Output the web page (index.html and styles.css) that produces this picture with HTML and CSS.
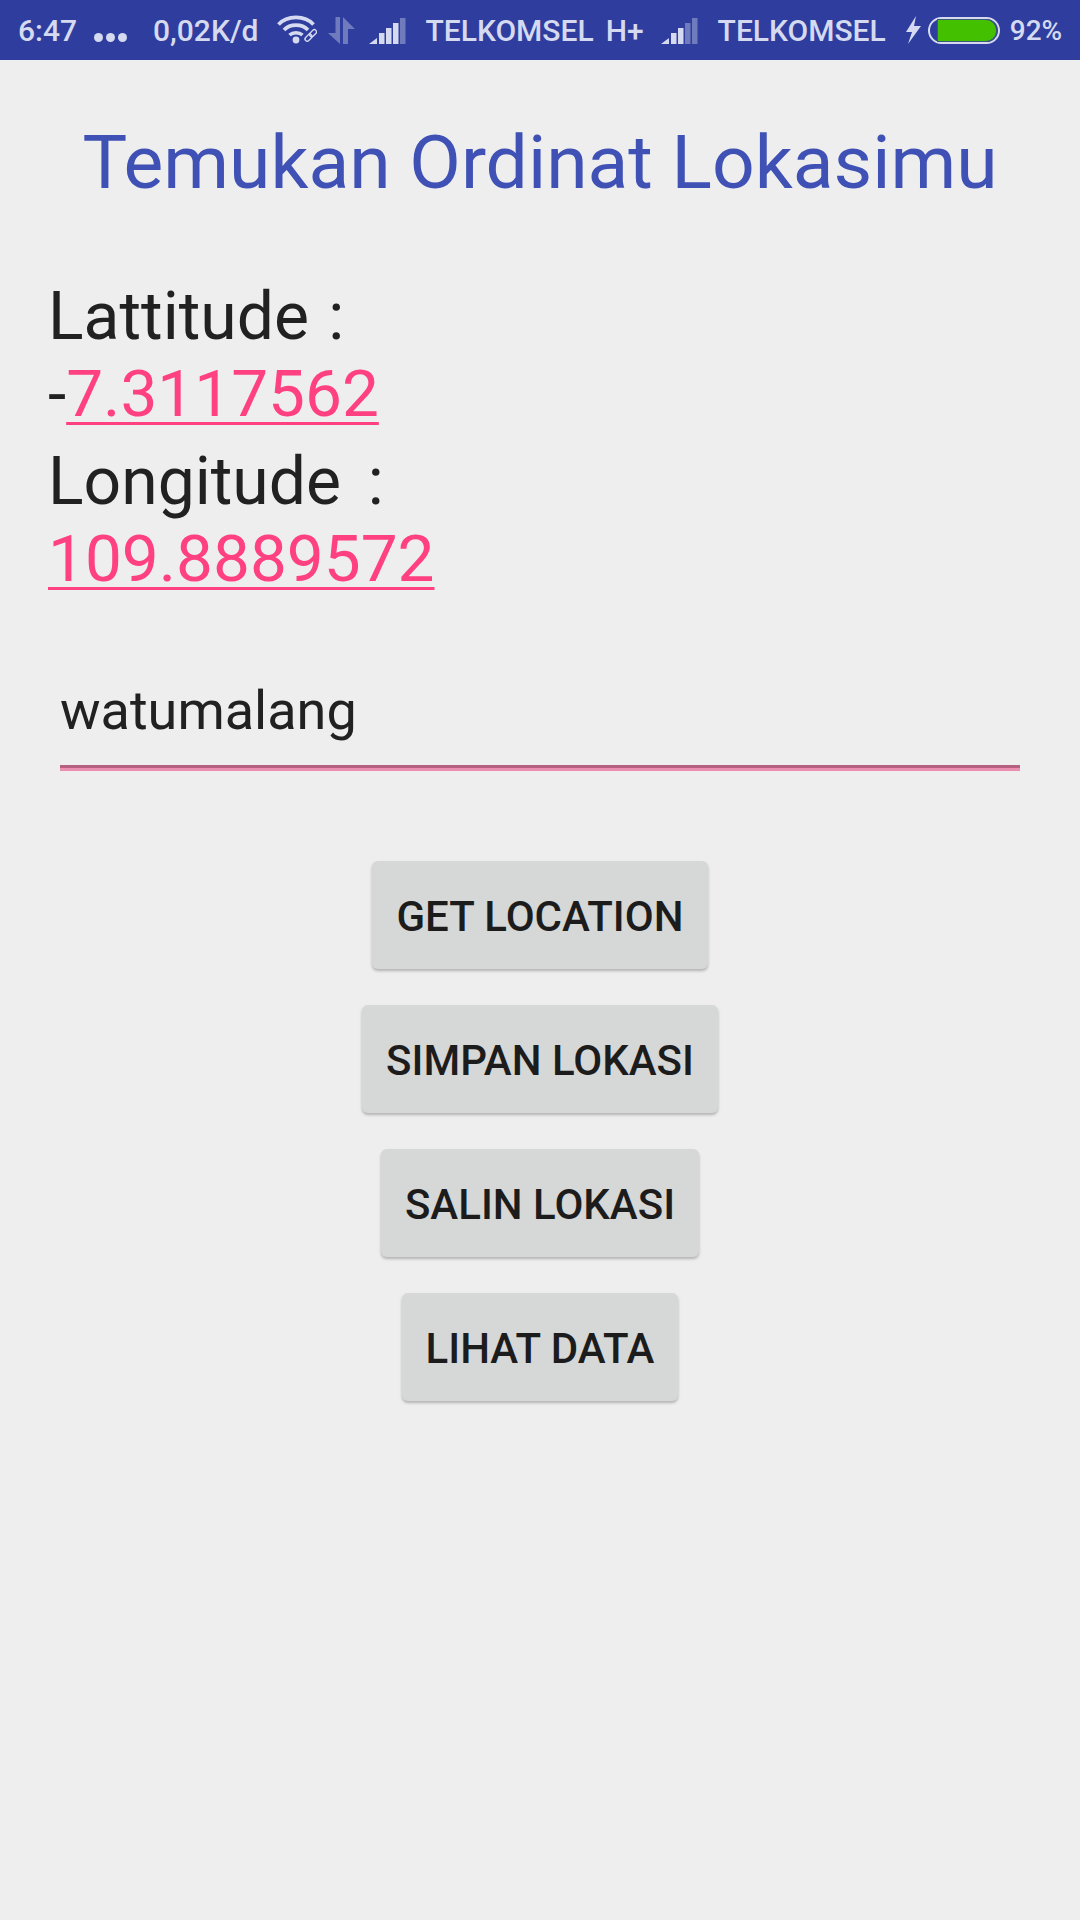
FILE: index.html
```html
<!DOCTYPE html>
<html lang="en">
<head>
    <meta charset="UTF-8">
    <title>Temukan Ordinat Lokasimu</title>
    <link rel="stylesheet" href="styles.css">
</head>
<body>

    <div class="status">
        <span class="s-time">6:47</span>
        <span class="s-dots"><i></i><i></i><i></i></span>
        <span class="s-speed">0,02K/d</span>
        <svg class="s-wifi" width="40" height="30" viewBox="0 0 40 30">
            <path d="M1.5 9.5 C10 0 28 0 36.5 9.5" fill="none" stroke="#d5daf0" stroke-width="3.6"/>
            <path d="M7 15 C13 8.5 25 8.5 31 15" fill="none" stroke="#d5daf0" stroke-width="3.6"/>
            <path d="M12.5 20 C16 17 22 17 25.5 20" fill="none" stroke="#d5daf0" stroke-width="3.6"/>
            <circle cx="19" cy="25" r="3.4" fill="#d5daf0"/>
            <rect x="27.5" y="20.5" width="8" height="4.4" rx="2.2" transform="rotate(-45 31.5 22.7)" fill="#2f3e9e" stroke="#d5daf0" stroke-width="1.4"/>
            <rect x="32" y="16" width="8" height="4.4" rx="2.2" transform="rotate(-45 36 18.2)" fill="none" stroke="#d5daf0" stroke-width="1.4"/>
        </svg>
        <svg class="s-arrows" width="28" height="27" viewBox="0 0 28 27">
            <path d="M8.5 0 H13 V27 L1 16 H8.5 Z" fill="#6f7bbd"/>
            <path d="M16 0 L28 12 H21 V27 H16 Z" fill="#6f7bbd"/>
        </svg>
        <svg class="s-signal" width="37" height="26" viewBox="0 0 37 26">
            <path d="M0 26 L8 20 V26 Z" fill="#d5daf0"/>
            <rect x="10" y="15" width="5.5" height="11" fill="#d5daf0"/>
            <rect x="17" y="10" width="5.5" height="16" fill="#d5daf0"/>
            <rect x="24" y="5" width="5.5" height="21" fill="#d5daf0"/>
            <rect x="31" y="0" width="5.5" height="26" fill="#6f7bbd"/>
        </svg>
        <span class="s-op">TELKOMSEL</span>
        <span class="s-net">H+</span>
        <svg class="s-signal2" width="37" height="26" viewBox="0 0 37 26">
            <path d="M0 26 L8 20 V26 Z" fill="#d5daf0"/>
            <rect x="10" y="15" width="5.5" height="11" fill="#d5daf0"/>
            <rect x="17" y="10" width="5.5" height="16" fill="#d5daf0"/>
            <rect x="24" y="5" width="5.5" height="21" fill="#6f7bbd"/>
            <rect x="31" y="0" width="5.5" height="26" fill="#6f7bbd"/>
        </svg>
        <span class="s-op2">TELKOMSEL</span>
        <svg class="s-bolt" width="16" height="28" viewBox="0 0 16 28">
            <path d="M11 0 L1 16 H7 L3 28 L16 10 H9 Z" fill="#d5daf0"/>
        </svg>
        <span class="s-batt"><span class="s-fill"></span></span>
        <span class="s-pct">92%</span>
    </div>

    <h1 class="title">Temukan Ordinat Lokasimu</h1>

    <div class="coords">
        <div class="label">Lattitude :</div>
        <div class="value">-<a href="#">7.3117562</a></div>
        <div class="label second">Longitude&nbsp; :</div>
        <div class="value"><a href="#">109.8889572</a></div>
    </div>

    <div class="field">watumalang</div>

    <div class="buttons">
        <button class="btn">GET LOCATION</button>
        <button class="btn">SIMPAN LOKASI</button>
        <button class="btn">SALIN LOKASI</button>
        <button class="btn">LIHAT DATA</button>
    </div>

</body>
</html>
```

FILE: styles.css
```css
*{margin: 0;padding: 0;box-sizing: border-box;}
a{color: #ff4081; text-decoration-thickness: 3px; text-underline-offset: 6px;}
body{width: 1080px; height: 1920px; background: #eeeeee; font-family: Roboto, sans-serif; color: #212121; overflow: hidden;}

.status{height: 60px; background: #2f3e9e; color: #d5daf0; font-size: 30px; font-weight: 500; display: flex; align-items: center; padding-left: 18px; white-space: nowrap;}
.s-dots{display: flex; gap: 3px; margin-left: 17px; margin-top: 14px;}
.s-dots i{display: block; width: 9px; height: 9px; border-radius: 50%; background: #d5daf0;}
.s-speed{margin-left: 26px;}
.s-wifi{margin-left: 18px;}
.s-arrows{margin-left: 10px;}
.s-signal{margin-left: 14px; margin-top: 2px;}
.s-op{margin-left: 20px;}
.s-net{margin-left: 12px;}
.s-signal2{margin-left: 17px; margin-top: 2px;}
.s-op2{margin-left: 20px;}
.s-bolt{margin-left: 19px;}
.s-batt{margin-left: 7px; width: 72px; height: 27px; border: 2px solid #d5daf0; border-radius: 14px; padding: 1px 2px 1px 8px; display: block;}
.s-fill{display: block; height: 100%; background: #43c000; border-radius: 0 10px 10px 0; box-shadow: 0 0 0 1px #3d5a78;}
.s-pct{margin-left: 10px; font-size: 28px;}

.title{font-size: 75px; font-weight: 400; color: #3f51b5; text-align: center; line-height: 84px; margin-top: 60px;}

.coords{margin-top: 74px; padding-left: 48px;}
.label,.value{font-size: 66px; line-height: 77px;}
.value{font-size: 65.7px;}
.label{word-spacing: 3px;}
.second{margin-top: 11px; word-spacing: -3px;}

.field{margin: 82px 60px 0; font-size: 54px; line-height: 64px; padding-bottom: 25px; border-bottom: 3px solid #ec8eb0; box-shadow: inset 0 -3px 0 #b5607f;}

.buttons{margin-top: 90px; display: flex; flex-direction: column; align-items: center; gap: 36px;}
.btn{height: 108px; padding: 2px 24px 0; background: #d6d7d7; border: none; border-radius: 6px; box-shadow: 0 2px 3px rgba(0,0,0,.25); font-family: Roboto, sans-serif; font-size: 42px; font-weight: 500; color: #1c1c1c;}
```
